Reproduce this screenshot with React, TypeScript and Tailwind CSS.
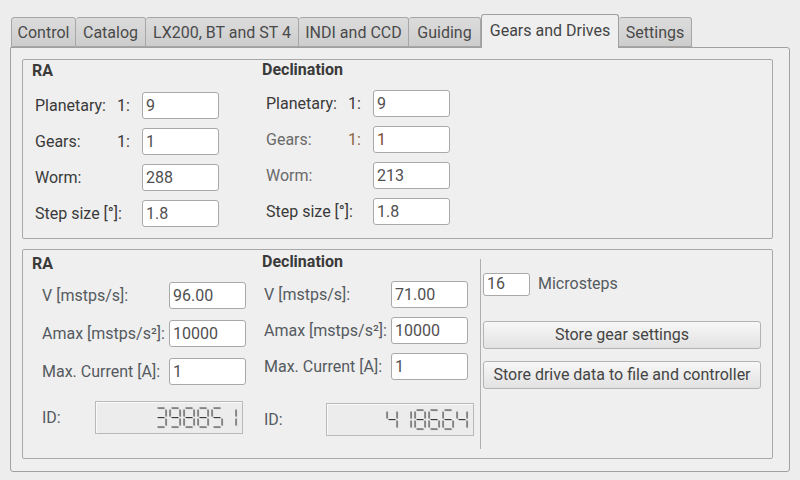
import React from "react"

const font = { fontFamily: "Roboto, 'Liberation Sans', sans-serif" }

const tabs = ["Control", "Catalog", "LX200, BT and ST 4", "INDI and CCD", "Guiding", "Gears and Drives", "Settings"]
const tabWidths = ["w-[65px]", "w-[70px]", "w-[153px]", "w-[110px]", "w-[72px]", "w-[138px]", "w-[73px]"]

const SEGS: Record<string, string> = {
	"0": "abcdef",
	"1": "bc",
	"2": "abged",
	"3": "abgcd",
	"4": "fgbc",
	"5": "afgcd",
	"6": "afgedc",
	"7": "abc",
	"8": "abcdefg",
	"9": "abcdfg",
}

const segLines: Record<string, [number, number, number, number]> = {
	a: [3.5, 1, 10.5, 1],
	b: [12, 2.5, 12, 9.5],
	c: [12, 11.5, 12, 18.5],
	d: [3.5, 20, 10.5, 20],
	e: [2, 11.5, 2, 18.5],
	f: [2, 2.5, 2, 9.5],
	g: [3.5, 10.5, 10.5, 10.5],
}

const SevenSeg = ({ value }: { value: string }) => {
	const w = value.length * 14
	return (
		<svg width={w} height={22} viewBox={`0 0 ${w} 22`}>
			{value.split("").map((ch, i) =>
				SEGS[ch].split("").map((s) => {
					const [x1, y1, x2, y2] = segLines[s]
					return (
						<g key={`${i}${s}`}>
							<line x1={x1 + i * 14 + 0.7} y1={y1 + 0.7} x2={x2 + i * 14 + 0.7} y2={y2 + 0.7} stroke="#c4c4c4" strokeWidth={1} />
							<line x1={x1 + i * 14} y1={y1} x2={x2 + i * 14} y2={y2} stroke="#3a3a3a" strokeWidth={1} />
						</g>
					)
				})
			)}
		</svg>
	)
}

const Field = ({ value, w = "w-[77px]", h = "h-[27px]", color = "text-[#505050]" }: { value: string; w?: string; h?: string; color?: string }) => (
	<div className={`${w} ${h} shrink-0 bg-white border border-[#a9a9a9] rounded-[3px] flex items-center pl-[3px] text-[16px] ${color}`}>
		{value}
	</div>
)

const Lcd = ({ value }: { value: string }) => (
	<div className="w-[148px] h-[33px] border border-[#b9b9b9] shadow-[inset_1px_1px_0_#fafafa] bg-[#ececec] flex items-center justify-end pr-[4px]">
		<SevenSeg value={value} />
	</div>
)

const Button = ({ label }: { label: string }) => (
	<div className="w-[278px] h-[28px] rounded-[3px] border border-[#b3b3b3] bg-gradient-to-b from-[#f7f7f7] to-[#e2e2e2] flex items-center justify-center text-[16px] text-[#444] whitespace-nowrap">
		{label}
	</div>
)

const GearRow = ({ label, ratio, value, labelColor = "text-[#3a3a3a]", ratioColor = "text-[#3a3a3a]", valueColor }: { label: string; ratio?: boolean; value: string; labelColor?: string; ratioColor?: string; valueColor?: string }) => (
	<div className="flex items-center h-[27px]">
		<div className={`w-[82px] whitespace-nowrap ${labelColor}`}>{label}</div>
		<div className={`w-[25px] ${ratioColor}`}>{ratio ? "1:" : ""}</div>
		<Field value={value} color={valueColor} />
	</div>
)

const DriveRow = ({ label, value, labelW }: { label: string; value: string; labelW: string }) => (
	<div className="flex items-center h-[27px]">
		<div className={`${labelW} whitespace-nowrap text-[#555a60]`}>{label}</div>
		<Field value={value} />
	</div>
)

export default function App() {
	return (
		<div className="w-[800px] h-[480px] bg-[#ededed] pt-[13px] pl-[10px] text-[16px] text-[#3a3a3a] overflow-hidden" style={font}>
			<div className="flex items-end h-[34px] pl-[1px]">
				{tabs.map((t, i) =>
					t === "Gears and Drives" ? (
						<div key={t} className={`${tabWidths[i]} h-[34px] -mb-[1px] z-10 bg-[#efefef] border border-b-0 border-[#a0a0a0] rounded-t-[3px] flex items-center justify-center text-[#444] pb-[2px]`}>
							{t}
						</div>
					) : (
						<div key={t} className={`${tabWidths[i]} h-[30px] bg-gradient-to-b from-[#dcdcdc] to-[#cdcdcd] border border-[#a6a6a6] border-l-0 first:border-l rounded-t-[3px] flex items-center justify-center text-[#4a4a4a] pt-[1px] whitespace-nowrap`}>
							{t}
						</div>
					)
				)}
			</div>
			<div className="w-[780px] h-[425px] border border-[#a0a0a0] rounded-[3px] rounded-tl-none bg-[#efefef] pt-[11px] pl-[11px] flex flex-col gap-[10px]">
				<div className="w-[751px] h-[180px] border border-[#a8a8a8] rounded-[2px] flex pt-[1px] pl-[9px]">
					<div className="w-[230px] flex flex-col">
						<div className="h-[20px] font-bold leading-[20px]">RA</div>
						<div className="flex flex-col gap-[9px] pl-[3px] mt-[11px]">
							<GearRow label="Planetary:" ratio value="9" />
							<GearRow label="Gears:" ratio value="1" />
							<GearRow label="Worm:" value="288" />
							<GearRow label="Step size [°]:" value="1.8" />
						</div>
					</div>
					<div className="flex flex-col -mt-[1px]">
						<div className="h-[20px] font-bold leading-[20px]">Declination</div>
						<div className="flex flex-col gap-[9px] pl-[4px] mt-[10px]">
							<GearRow label="Planetary:" ratio value="9" />
							<GearRow label="Gears:" ratio value="1" labelColor="text-[#6a6a6a]" ratioColor="text-[#8a6440]" valueColor="text-[#7a4a30]" />
							<GearRow label="Worm:" value="213" labelColor="text-[#6a6a6a]" />
							<GearRow label="Step size [°]:" value="1.8" />
						</div>
					</div>
				</div>
				<div className="w-[751px] h-[210px] border border-[#a8a8a8] rounded-[2px] flex pt-[4px] pl-[9px]">
					<div className="w-[230px] flex flex-col">
						<div className="h-[20px] font-bold leading-[20px]">RA</div>
						<div className="flex flex-col gap-[11px] pl-[10px] mt-[8px]">
							<DriveRow label="V [mstps/s]:" value="96.00" labelW="w-[127px]" />
							<DriveRow label="Amax [mstps/s²]:" value="10000" labelW="w-[127px]" />
							<DriveRow label="Max. Current [A]:" value="1" labelW="w-[127px]" />
						</div>
						<div className="flex items-center pl-[10px] mt-[16px]">
							<div className="w-[53px] text-[#555a60]">ID:</div>
							<Lcd value="398851" />
						</div>
					</div>
					<div className="w-[218px] flex flex-col -mt-[2px]">
						<div className="h-[20px] font-bold leading-[20px]">Declination</div>
						<div className="flex flex-col gap-[9px] pl-[2px] mt-[9px]">
							<DriveRow label="V [mstps/s]:" value="71.00" labelW="w-[127px]" />
							<DriveRow label="Amax [mstps/s²]:" value="10000" labelW="w-[127px]" />
							<DriveRow label="Max. Current [A]:" value="1" labelW="w-[127px]" />
						</div>
						<div className="flex items-center pl-[2px] mt-[23px]">
							<div className="w-[62px] text-[#555a60]">ID:</div>
							<Lcd value="418664" />
						</div>
					</div>
					<div className="w-px h-[190px] bg-[#b0b0b0] mt-[5px]" />
					<div className="flex flex-col pl-[2px] pt-[18px]">
						<div className="flex items-center gap-[8px]">
							<Field value="16" w="w-[47px]" h="h-[23px]" />
							<div className="text-[#555a60]">Microsteps</div>
						</div>
						<div className="flex flex-col gap-[12px] mt-[25px]">
							<Button label="Store gear settings" />
							<Button label="Store drive data to file and controller" />
						</div>
					</div>
				</div>
			</div>
		</div>
	)
}
